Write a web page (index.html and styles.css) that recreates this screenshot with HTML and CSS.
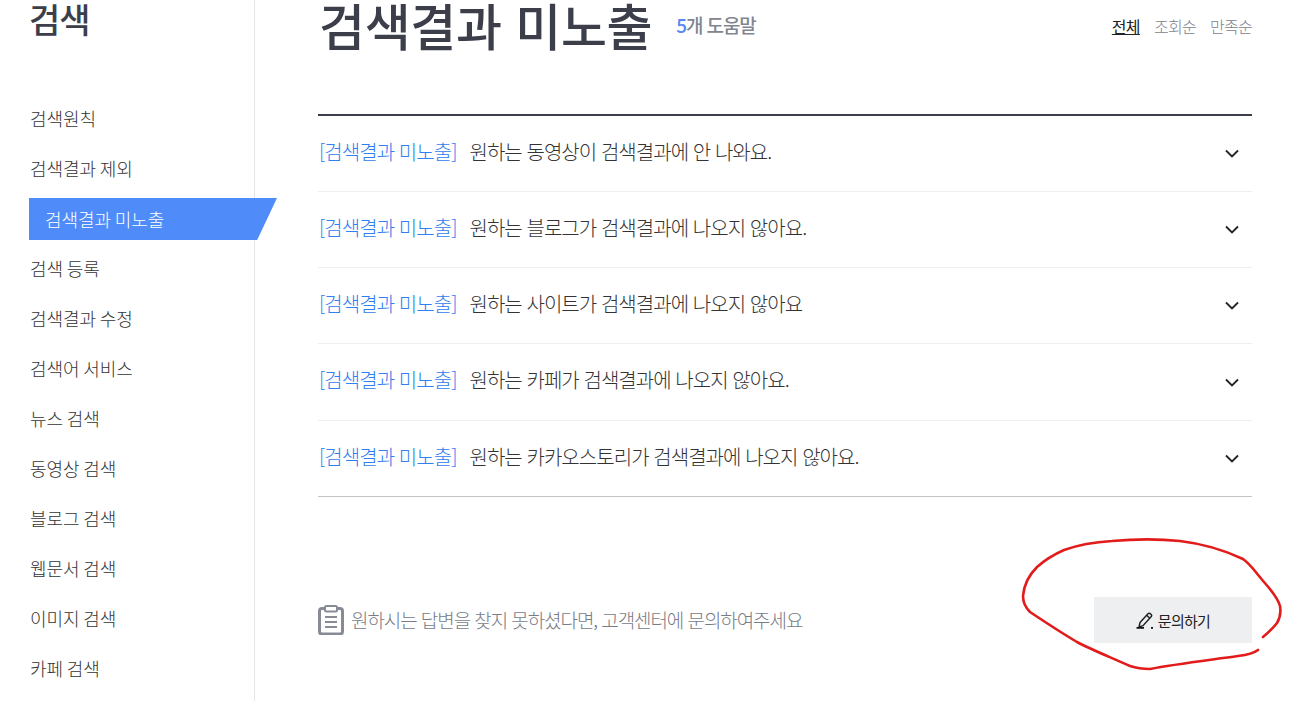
FILE: index.html
```html
<!DOCTYPE html>
<html lang="ko">
<head>
  <meta charset="UTF-8">
  <meta name="viewport" content="width=device-width, initial-scale=1.0">
  <title>검색결과 미노출</title>
  <link rel="stylesheet" href="styles.css">
</head>
<body>
  <div class="page">
    <aside class="sidebar">
      <h2 class="side-title">검색</h2>
      <ul class="side-menu">
        <li>검색원칙</li>
        <li>검색결과 제외</li>
        <li class="active">검색결과 미노출</li>
        <li>검색 등록</li>
        <li>검색결과 수정</li>
        <li>검색어 서비스</li>
        <li>뉴스 검색</li>
        <li>동영상 검색</li>
        <li>블로그 검색</li>
        <li>웹문서 검색</li>
        <li>이미지 검색</li>
        <li>카페 검색</li>
      </ul>
    </aside>

    <main class="content">
      <div class="head">
        <h1>검색결과 미노출</h1>
        <span class="count"><em>5</em>개 도움말</span>
        <div class="sort">
          <a class="on">전체</a>
          <a>조회순</a>
          <a>만족순</a>
        </div>
      </div>

      <ul class="faq">
        <li>
          <span class="tag">[검색결과 미노출]</span>
          <span class="question">원하는 동영상이 검색결과에 안 나와요.</span>
          <svg class="chevron" viewBox="0 0 14 9"><path d="M1 1.500l6 6 6-6"/></svg>
        </li>
        <li>
          <span class="tag">[검색결과 미노출]</span>
          <span class="question">원하는 블로그가 검색결과에 나오지 않아요.</span>
          <svg class="chevron" viewBox="0 0 14 9"><path d="M1 1.500l6 6 6-6"/></svg>
        </li>
        <li>
          <span class="tag">[검색결과 미노출]</span>
          <span class="question">원하는 사이트가 검색결과에 나오지 않아요</span>
          <svg class="chevron" viewBox="0 0 14 9"><path d="M1 1.500l6 6 6-6"/></svg>
        </li>
        <li>
          <span class="tag">[검색결과 미노출]</span>
          <span class="question">원하는 카페가 검색결과에 나오지 않아요.</span>
          <svg class="chevron" viewBox="0 0 14 9"><path d="M1 1.500l6 6 6-6"/></svg>
        </li>
        <li>
          <span class="tag">[검색결과 미노출]</span>
          <span class="question">원하는 카카오스토리가 검색결과에 나오지 않아요.</span>
          <svg class="chevron" viewBox="0 0 14 9"><path d="M1 1.500l6 6 6-6"/></svg>
        </li>
      </ul>

      <div class="ask">
        <svg class="clip" viewBox="0 0 26 30">
          <path class="clip-body" d="M7 3.500H4a2.500 2.500 0 0 0-2.500 2.500v20.500A2.500 2.500 0 0 0 4 29h18a2.500 2.500 0 0 0 2.500-2.500V6A2.500 2.500 0 0 0 22 3.500h-3"/>
          <rect class="clip-top" x="7" y="1" width="12" height="5.500" rx="1.500"/>
          <path class="clip-lines" d="M7 12h12M7 17h12M7 22h12"/>
        </svg>
        <p>원하시는 답변을 찾지 못하셨다면, 고객센터에 문의하여주세요</p>
        <a class="ask-btn">
          <svg class="pencil" viewBox="0 0 18 18">
            <path d="M4 11.500L12 2.700c.6-.7 1.600-.7 2.200-.1l1 .9c.6.6.6 1.500.1 2.100L7 14.700l-4 1.200z"/>
            <path d="M10.600 4.300l3.300 3"/>
            <path class="pencil-base" d="M0.500 16.800h7.500M15 16.800h2"/>
          </svg>
          문의하기
        </a>
      </div>
    </main>

    <svg class="scribble" viewBox="0 0 1294 701">
      <path d="M1258 650C1253 654 1246 655 1238 656C1210 660 1175 664 1150 669C1142 669 1136 668 1130 666C1110 657 1092 650 1077 642C1060 632 1045 622 1030 612C1025 607 1023 602 1023 596C1024 584 1030 574 1037 567C1046 559 1055 554 1064 550C1078 545 1095 542 1112 541C1135 539 1160 539 1180 541C1205 544 1226 551 1243 559C1250 564 1254 570 1259 576C1266 585 1277 595 1280 606C1281 612 1280 618 1277 623C1273 628 1268 633 1263 637"/>
    </svg>
  </div>
</body>
</html>
```

FILE: styles.css
```css
html, body {
  margin: 0;
  height: 100%;
  overflow: hidden;
}

body {
  font-family: "Noto Sans CJK KR", "Noto Sans", sans-serif;
  color: #333;
  background-color: #fff;
}

ul {
  list-style: none;
  margin: 0;
  padding: 0;
}

.page {
  position: relative;
  display: flex;
  height: 701px;
  overflow: hidden;
}

.sidebar {
  box-sizing: border-box;
  flex: 0 0 255px;
  min-width: 0;
  border-right: 1px solid #e5e5e8;
  padding-left: 29px;
}

.side-title {
  margin: 1px 0 0;
  height: 92px;
  font-size: 34px;
  line-height: 36px;
  font-weight: 500;
  letter-spacing: -1px;
  color: #3c3f4a;
}

.side-menu li {
  height: 50px;
  line-height: 50px;
  padding-left: 1px;
  font-size: 18px;
  font-weight: 300;
  letter-spacing: -0.1px;
  word-spacing: -1px;
}

.side-menu li.active {
  height: 42px;
  line-height: 42px;
  width: 248px;
  box-sizing: border-box;
  margin: 5px 0 3px;
  padding-left: 16px;
  color: #fff;
  background-color: #4f8cf9;
  clip-path: polygon(0 0, 100% 0, 92% 100%, 0 100%);
}

.content {
  flex: 1;
  min-width: 0;
  padding: 0 42px 0 63px;
}

.head {
  display: flex;
  align-items: flex-start;
  height: 114px;
  border-bottom: 2px solid #3c3f4a;
}

.head h1 {
  margin: -1px 0 0 1px;
  font-size: 50px;
  line-height: 50px;
  font-weight: 500;
  letter-spacing: -0.35px;
  color: #3c3f4a;
}

.count {
  margin: 11px 0 0 24px;
  font-size: 19px;
  line-height: 28px;
  font-weight: 500;
  letter-spacing: -1.1px;
  color: #80858f;
}

.count em {
  font-style: normal;
  color: #5b87f5;
}

.sort {
  display: flex;
  gap: 14px;
  margin: 14px 0 0 auto;
  font-size: 16px;
  line-height: 24px;
  font-weight: 300;
  letter-spacing: -0.7px;
  color: #7d818c;
}

.sort .on {
  color: #222;
  font-weight: 400;
  text-decoration: underline;
}

.faq li {
  box-sizing: border-box;
  display: flex;
  align-items: center;
  height: 76px;
  border-bottom: 1px solid #efeff1;
  padding: 0 0 5px 1px;
  font-size: 20px;
  font-weight: 300;
  letter-spacing: -0.95px;
}

.faq li:nth-child(4) {
  height: 77px;
}

.faq li:last-child {
  border-bottom-color: #c4c4c6;
}

.tag {
  color: #2f80f0;
  margin-right: 13px;
}

.chevron {
  width: 14px;
  height: 9px;
  margin: 5px 13px 0 auto;
  fill: none;
  stroke: #222;
  stroke-width: 1.8;
}

.ask {
  display: flex;
  align-items: center;
  margin-top: 100px;
  height: 46px;
}

.clip {
  width: 26px;
  height: 30px;
  fill: none;
  stroke: #868b96;
}

.clip-body {
  stroke-width: 3;
}

.clip-top {
  stroke-width: 2;
}

.clip-lines {
  stroke-width: 2;
}

.ask p {
  margin: -2px 0 0 7px;
  font-size: 19px;
  font-weight: 300;
  letter-spacing: -1.08px;
  color: #777b86;
}

.ask-btn {
  display: flex;
  align-items: center;
  justify-content: center;
  gap: 4px;
  width: 158px;
  height: 46px;
  margin-left: auto;
  font-size: 15px;
  letter-spacing: -0.7px;
  color: #222;
  background-color: #eeeff1;
}

.pencil {
  width: 18px;
  height: 18px;
  fill: none;
  stroke: #222;
  stroke-width: 1.5;
}

.pencil-base {
  stroke: #111;
  stroke-width: 1.800;
}

.scribble {
  position: absolute;
  left: 0;
  top: 0;
  width: 1294px;
  height: 701px;
  fill: none;
  stroke: #e21b1b;
  stroke-width: 2.6;
  stroke-linecap: round;
  pointer-events: none;
}
```
